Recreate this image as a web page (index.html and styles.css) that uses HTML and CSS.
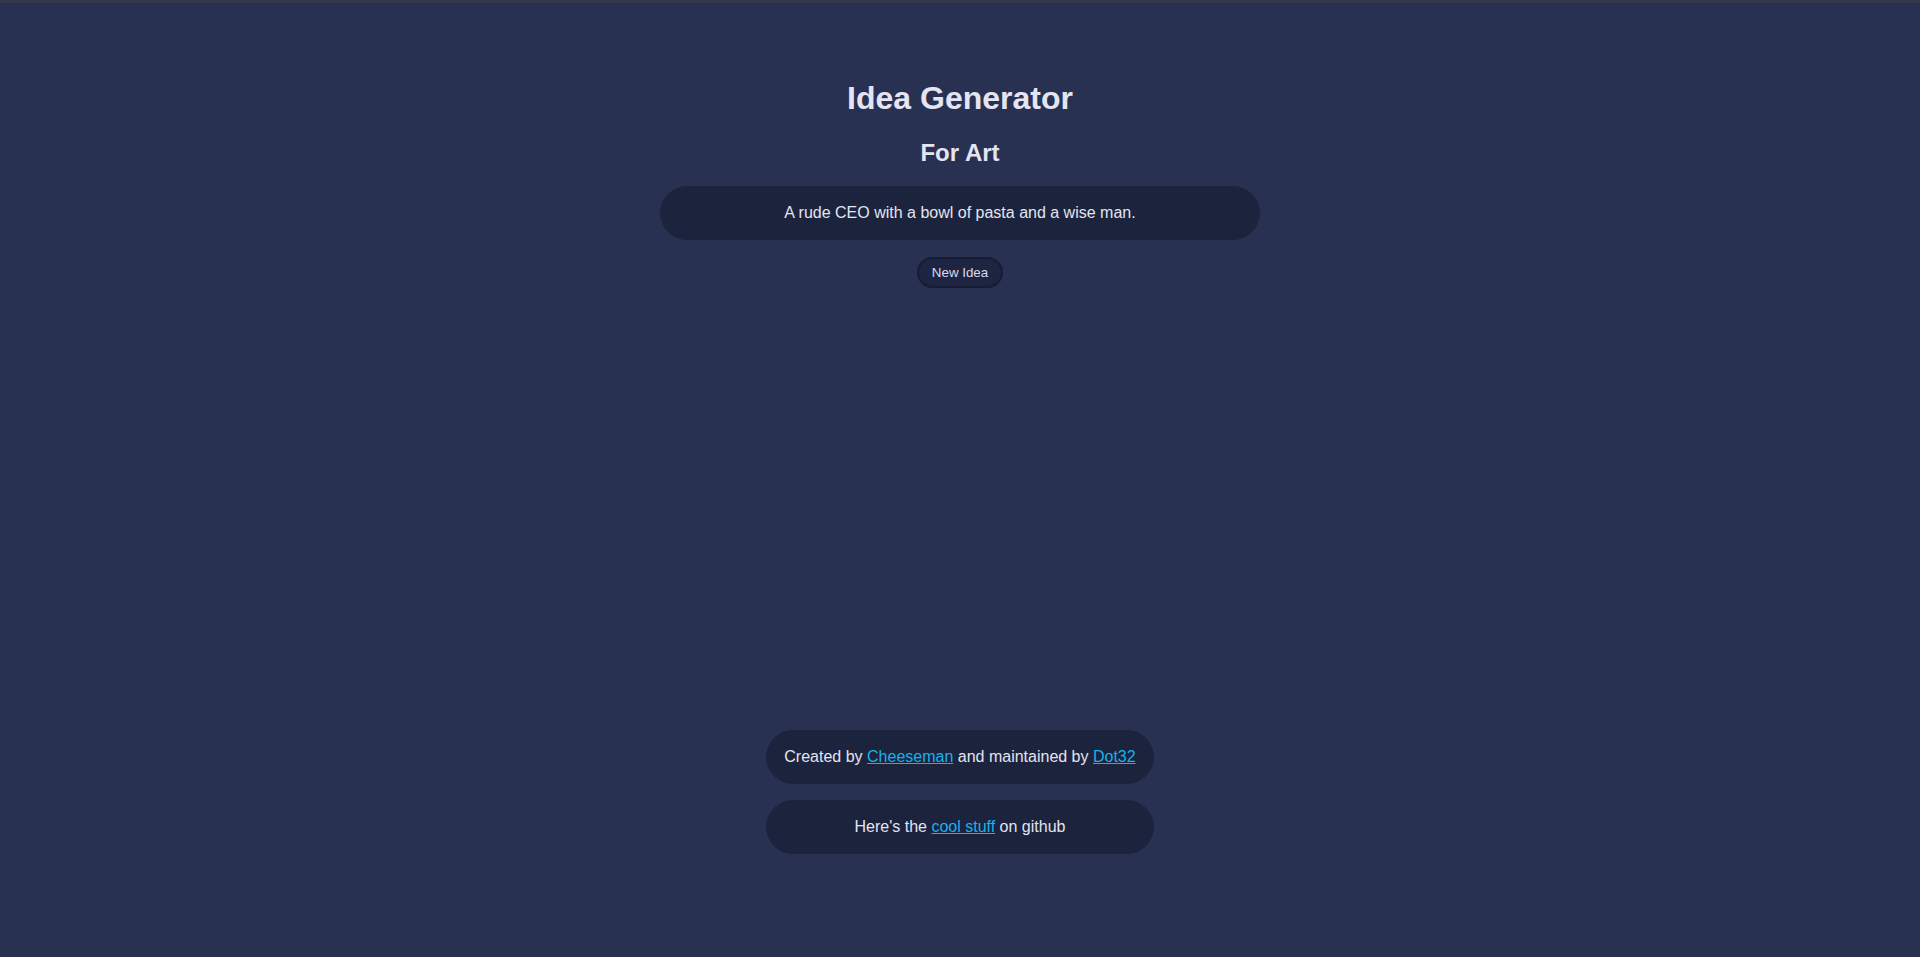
FILE: index.html
```html
<!DOCTYPE html>
<html lang="en">
<head>
<meta charset="utf-8">
<title>Idea Generator</title>
<link rel="stylesheet" href="styles.css">
</head>
<body>
<main class="page">
  <header class="head">
    <h1 class="title">Idea Generator</h1>
    <h2 class="subtitle">For Art</h2>
  </header>
  <div class="idea">A rude CEO with a bowl of pasta and a wise man.</div>
  <button class="new-idea" type="button">New Idea</button>
  <footer class="footer">
    <div class="pill">Created by <a href="#" class="link">Cheeseman</a> and maintained by <a href="#" class="link">Dot32</a></div>
    <div class="pill">Here's the <a href="#" class="link">cool stuff</a> on github</div>
  </footer>
</main>
</body>
</html>
```

FILE: styles.css
```css
* { box-sizing: border-box; }
html, body { margin: 0; padding: 0; }
body {
  background: #283151;
  color: #e4e4f2;
  font-family: "Liberation Sans", Arial, sans-serif;
  border-top: 3px solid #35384b;
  min-height: 100vh;
}
.page {
  min-height: calc(100vh - 3px);
  display: flex;
  flex-direction: column;
  align-items: center;
  padding: 56px 0 103.5px;
}
.head { text-align: center; }
.title {
  font-size: 32px;
  font-weight: bold;
  margin: 21.44px 0;
}
.subtitle {
  font-size: 24px;
  font-weight: bold;
  margin: 19.92px 0 19px;
}
.idea {
  width: 600px;
  padding: 18.5px 18px 17.5px;
  background: #1c233d;
  border-radius: 27px;
  text-align: center;
  font-size: 16px;
  line-height: 18.4px;
}
.new-idea {
  margin-top: 16.5px;
  font-family: "Liberation Sans", Arial, sans-serif;
  font-size: 13.33px;
  line-height: 15px;
  color: #d8dbec;
  background: #1d2542;
  border: 2px solid #161c31;
  border-radius: 16px;
  padding: 6px 13px;
  height: 31px;
  cursor: pointer;
}
.footer {
  margin-top: auto;
  display: flex;
  flex-direction: column;
  gap: 16.5px;
}
.pill {
  background: #1c233d;
  border-radius: 27px;
  padding: 17.5px 18.5px;
  text-align: center;
  font-size: 16px;
  line-height: 18.4px;
}
.link { color: #19b2ea; }
```
